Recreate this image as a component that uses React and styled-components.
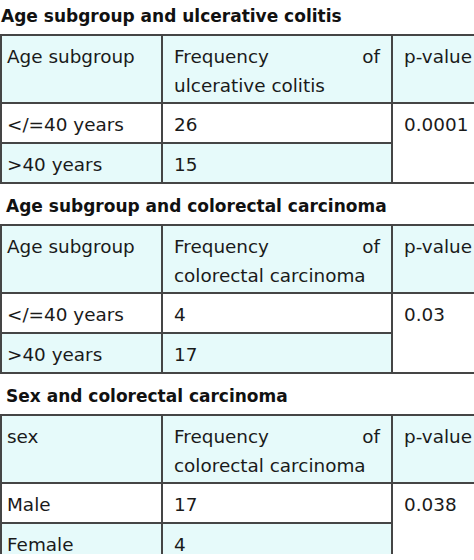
import React from "react";
import styled, { createGlobalStyle } from "styled-components";

const Global = createGlobalStyle`
  html, body {
    margin: 0;
    padding: 0;
    background: #ffffff;
    overflow: hidden;
  }
  body {
    font-family: "DejaVu Sans", "Liberation Sans", sans-serif;
    color: #1a1a1a;
  }
`;

const Page = styled.div`
  width: 474px;
  height: 560px;
  overflow: hidden;
  margin-top: -6px;
`;

const Section = styled.section`
  display: flex;
  flex-direction: column;
`;

const Title = styled.h2`
  margin: 0;
  height: 40px;
  box-sizing: border-box;
  padding: 12px 0 0 ${(p) => p.$indent}px;
  font-size: 17px;
  line-height: 20px;
  font-weight: 700;
  color: #111111;
  white-space: nowrap;
`;

const Grid = styled.div`
  display: grid;
  grid-template-columns: 161px 230px 110px;
  grid-template-rows: 68px 40px 40px;
  border-top: 2px solid #454545;
  border-left: 2px solid #454545;
  width: max-content;
`;

const Cell = styled.div`
  box-sizing: border-box;
  border-right: 2px solid #454545;
  border-bottom: 2px solid #454545;
  background: ${(p) => (p.$tint ? "#e6fafa" : "#ffffff")};
  padding: 6px 11px 0 ${(p) => (p.$first ? 5 : 11)}px;
  font-size: 18.4px;
  line-height: 29px;
  color: #1a1a1a;
  white-space: nowrap;
  grid-row: ${(p) => (p.$span ? `span ${p.$span}` : "auto")};
`;

const SpreadLine = styled.div`
  display: flex;
  justify-content: space-between;
`;

const sections = [
  {
    title: "Age subgroup and ulcerative colitis",
    indent: 1,
    first: "Age subgroup",
    freq: "ulcerative colitis",
    rows: [
      ["</=40 years", "26"],
      [">40 years", "15"],
    ],
    p: "0.0001",
  },
  {
    title: "Age subgroup and colorectal carcinoma",
    indent: 6,
    first: "Age subgroup",
    freq: "colorectal carcinoma",
    rows: [
      ["</=40 years", "4"],
      [">40 years", "17"],
    ],
    p: "0.03",
  },
  {
    title: "Sex and colorectal carcinoma",
    indent: 6,
    first: "sex",
    freq: "colorectal carcinoma",
    rows: [
      ["Male", "17"],
      ["Female", "4"],
    ],
    p: "0.038",
  },
];

function TableSection({ s }) {
  return (
    <Section>
      <Title $indent={s.indent}>{s.title}</Title>
      <Grid>
        <Cell $tint $first>{s.first}</Cell>
        <Cell $tint>
          <SpreadLine>
            <span>Frequency</span>
            <span>of</span>
          </SpreadLine>
          <div>{s.freq}</div>
        </Cell>
        <Cell $tint>p-value</Cell>
        <Cell $first>{s.rows[0][0]}</Cell>
        <Cell>{s.rows[0][1]}</Cell>
        <Cell $span={2}>{s.p}</Cell>
        <Cell $tint $first>{s.rows[1][0]}</Cell>
        <Cell $tint>{s.rows[1][1]}</Cell>
      </Grid>
    </Section>
  );
}

export default function App() {
  return (
    <>
      <Global />
      <Page>
        {sections.map((s) => (
          <TableSection key={s.title} s={s} />
        ))}
      </Page>
    </>
  );
}
